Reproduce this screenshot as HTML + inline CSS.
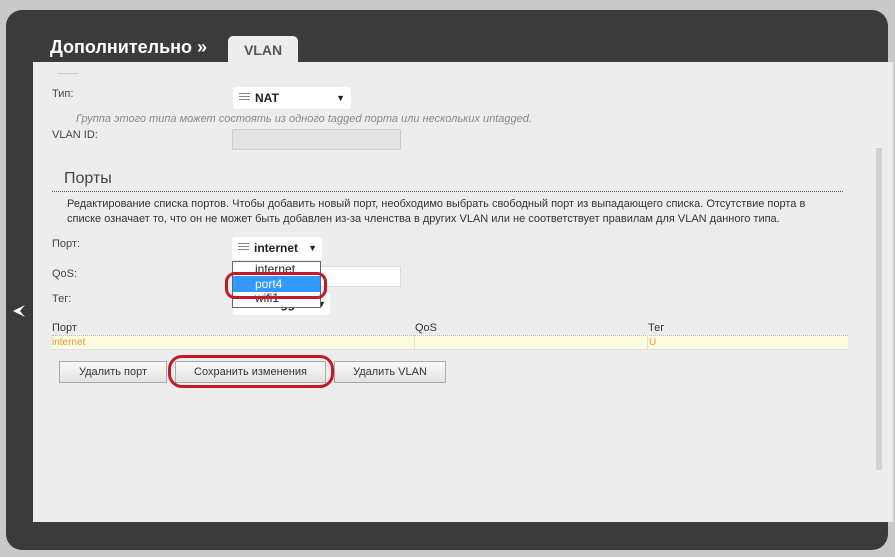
<!DOCTYPE html>
<html><head><meta charset="utf-8"><style>
*{margin:0;padding:0;box-sizing:border-box}
body{width:895px;height:557px;background:#c9c9c9;position:relative;overflow:hidden;font-family:"Liberation Sans",sans-serif;font-size:11px;color:#333}
.a{position:absolute}
.dark{left:6px;top:10px;width:882px;height:540px;background:#3b3b3b;border-radius:16px}
.panel{left:33px;top:62px;width:860px;height:460px;background:#ededed}
.tab{left:228px;top:36px;width:70px;height:27px;background:#ededed;border-radius:5px 5px 0 0;font-weight:bold;font-size:14px;color:#555;text-align:center;line-height:28px}
.title{left:50px;top:37px;color:#fff;font-weight:bold;font-size:18px}
.sel{background:#fff;border-radius:3px;font-weight:bold;font-size:12px;color:#222;padding-left:22px;line-height:22px}
.ic{position:absolute;left:6px;top:6px;width:11px;height:9px;background:repeating-linear-gradient(#888 0 1px,transparent 1px 3px)}
.lbl{font-size:11px;color:#444}
.btn{height:22px;border:1px solid #aaa;background:linear-gradient(#fafafa,#e3e3e3);text-align:center;line-height:20px;font-size:11px;color:#333}
.oval{border:3px solid #c21a2a;border-radius:10px}
</style></head><body>
<div class="a dark"></div>
<div class="a title">Дополнительно »</div>
<div class="a tab">VLAN</div>
<div class="a panel"></div>
<div class="a" style="left:876px;top:148px;width:6px;height:322px;background:#d2d2d2"></div>
<div class="a" style="left:58px;top:73px;width:20px;border-top:1px solid #ccc"></div>
<div class="a lbl" style="left:52px;top:88px">Тип:</div>
<div class="a sel" style="left:233px;top:87px;width:118px;height:22px"><span class="ic"></span>NAT<span style="position:absolute;right:6px;font-size:9px">▼</span></div>
<div class="a" style="left:76px;top:113px;font-style:italic;color:#888;font-size:11px">Группа этого типа может состоять из одного tagged порта или нескольких untagged.</div>
<div class="a lbl" style="left:52px;top:129px">VLAN ID:</div>
<div class="a" style="left:232px;top:129px;width:169px;height:21px;background:#e3e3e3;border:1px solid #ccc;border-radius:2px"></div>
<div class="a" style="left:64px;top:170px;font-size:16px;color:#444">Порты</div>
<div class="a" style="left:52px;top:191px;width:791px;border-top:1px dotted #555"></div>
<div class="a" style="left:67px;top:197px;font-size:11px;color:#333;line-height:15px">Редактирование списка портов. Чтобы добавить новый порт, необходимо выбрать свободный порт из выпадающего списка. Отсутствие порта в<br>списке означает то, что он не может быть добавлен из-за членства в других VLAN или не соответствует правилам для VLAN данного типа.</div>
<div class="a lbl" style="left:52px;top:238px">Порт:</div>
<div class="a lbl" style="left:52px;top:268px">QoS:</div>
<div class="a lbl" style="left:52px;top:293px">Тег:</div>
<div class="a" style="left:320px;top:266px;width:81px;height:21px;background:#fff;border:1px solid #ddd"></div>
<div class="a sel" style="left:233px;top:293px;width:97px;height:22px"><span class="ic"></span>untagged<span style="position:absolute;right:4px;font-size:9px">▼</span></div>
<div class="a sel" style="left:232px;top:237px;width:90px;height:23px;font-size:12px"><span class="ic"></span>internet<span style="position:absolute;right:5px;font-size:9px">▼</span></div>
<div class="a" style="left:232px;top:261px;width:89px;height:47px;background:#fff;border:1px solid #666;font-size:12px;color:#222">
<div style="padding-left:22px;height:14px;line-height:14px">internet</div>
<div style="padding-left:22px;height:16px;line-height:16px;background:#3399ff;color:#fff">port4</div>
<div style="padding-left:22px;height:14px;line-height:12px">wifi1</div>
</div>
<div class="a oval" style="left:225px;top:272px;width:102px;height:27px"></div>
<div class="a" style="left:52px;top:322px;font-size:11px;color:#333">Порт</div>
<div class="a" style="left:415px;top:322px;font-size:11px;color:#333">QoS</div>
<div class="a" style="left:648px;top:322px;font-size:11px;color:#333">Тег</div>
<div class="a" style="left:52px;top:335px;width:796px;height:15px;background:#fdfbe0;border-top:1px dotted #bbb;border-bottom:1px solid #ddd"></div>
<div class="a" style="left:414px;top:335px;height:15px;border-left:1px solid #ddd"></div>
<div class="a" style="left:647px;top:335px;height:15px;border-left:1px solid #ddd"></div>
<div class="a" style="left:52px;top:337px;color:#e09a3a;font-size:10px">internet</div>
<div class="a" style="left:649px;top:337px;color:#e09a3a;font-size:10px">U</div>
<div class="a btn" style="left:59px;top:361px;width:108px">Удалить порт</div>
<div class="a btn" style="left:175px;top:361px;width:151px">Сохранить изменения</div>
<div class="a btn" style="left:334px;top:361px;width:112px">Удалить VLAN</div>
<div class="a oval" style="left:168px;top:355px;width:166px;height:33px;border-radius:14px"></div>
<svg class="a" style="left:11px;top:303px" width="16" height="16"><path d="M14 2 L2 8 L14 14 L9 8 Z" fill="#fff"/></svg>
</body></html>
